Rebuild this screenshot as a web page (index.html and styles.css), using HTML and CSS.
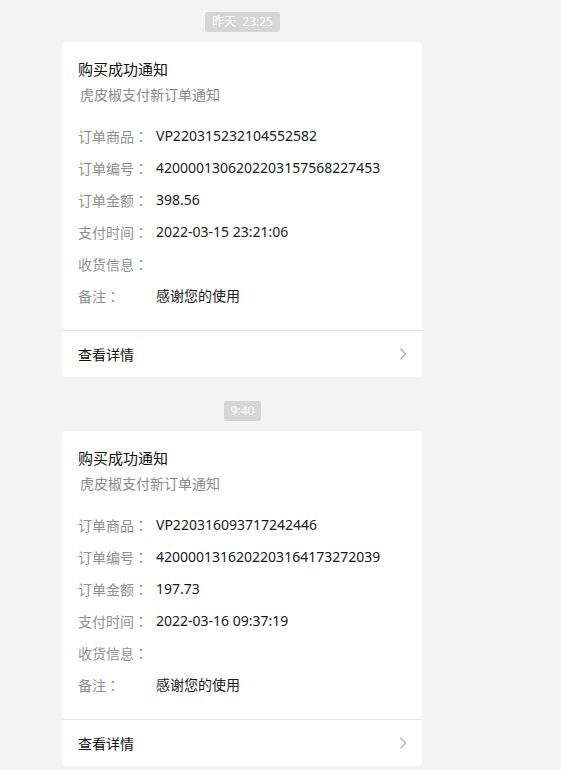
FILE: index.html
```html
<!DOCTYPE html>
<html lang="zh-CN">
<head>
<meta charset="utf-8">
<title>购买成功通知</title>
<link rel="stylesheet" href="styles.css">
</head>
<body>
<div class="feed">
  <div class="msg">
    <div class="time"><span class="pill">昨天&nbsp;&nbsp;23:25</span></div>
    <div class="card">
      <div class="body">
        <div class="title">购买成功通知</div>
        <div class="sub">虎皮椒支付新订单通知</div>
        <div class="rows">
          <div class="label">订单商品<span class="colon" lang="zh-TW">：</span></div><div class="value">VP220315232104552582</div>
          <div class="label">订单编号<span class="colon" lang="zh-TW">：</span></div><div class="value">4200001306202203157568227453</div>
          <div class="label">订单金额<span class="colon" lang="zh-TW">：</span></div><div class="value">398.56</div>
          <div class="label">支付时间<span class="colon" lang="zh-TW">：</span></div><div class="value">2022-03-15 23:21:06</div>
          <div class="label">收货信息<span class="colon" lang="zh-TW">：</span></div><div class="value"></div>
          <div class="label">备注<span class="colon" lang="zh-TW">：</span></div><div class="value">感谢您的使用</div>
        </div>
      </div>
      <div class="foot">
        <span>查看详情</span>
        <svg class="chev" width="8" height="14" viewBox="0 0 8 14"><polyline points="1.5,1.5 6.5,7 1.5,12.5" fill="none" stroke="#b5b5b5" stroke-width="1.4"/></svg>
      </div>
    </div>
  </div>
  <div class="msg">
    <div class="time"><span class="pill">9:40</span></div>
    <div class="card">
      <div class="body">
        <div class="title">购买成功通知</div>
        <div class="sub">虎皮椒支付新订单通知</div>
        <div class="rows">
          <div class="label">订单商品<span class="colon" lang="zh-TW">：</span></div><div class="value">VP220316093717242446</div>
          <div class="label">订单编号<span class="colon" lang="zh-TW">：</span></div><div class="value">4200001316202203164173272039</div>
          <div class="label">订单金额<span class="colon" lang="zh-TW">：</span></div><div class="value">197.73</div>
          <div class="label">支付时间<span class="colon" lang="zh-TW">：</span></div><div class="value">2022-03-16 09:37:19</div>
          <div class="label">收货信息<span class="colon" lang="zh-TW">：</span></div><div class="value"></div>
          <div class="label">备注<span class="colon" lang="zh-TW">：</span></div><div class="value">感谢您的使用</div>
        </div>
      </div>
      <div class="foot">
        <span>查看详情</span>
        <svg class="chev" width="8" height="14" viewBox="0 0 8 14"><polyline points="1.5,1.5 6.5,7 1.5,12.5" fill="none" stroke="#b5b5b5" stroke-width="1.4"/></svg>
      </div>
    </div>
  </div>
</div>
</body>
</html>
```
FILE: styles.css
```css
html, body {
  margin: 0;
  padding: 0;
  background: #f4f4f4;
}
body {
  font-family: "Noto Sans", "Noto Sans CJK SC", sans-serif;
  color: #111;
}
.feed {
  width: 360px;
  margin-left: 62px;
  padding-top: 12px;
  display: flex;
  flex-direction: column;
  gap: 24px;
}
.msg {
  display: flex;
  flex-direction: column;
  gap: 10px;
}
.time {
  display: flex;
  justify-content: center;
  padding-left: 1px;
}
.pill {
  display: inline-block;
  height: 20px;
  line-height: 20px;
  padding: 0 7px;
  background: #d6d6d6;
  color: #fff;
  font-size: 12px;
  border-radius: 2px;
  white-space: pre;
}
.card {
  background: #fff;
  border-radius: 4px;
}
.body {
  padding: 16px 16px 18px;
  border-bottom: 1px solid #e8e8e8;
}
.title {
  font-size: 15px;
  line-height: 22px;
  color: #111;
}
.sub {
  margin-top: 4px;
  padding-left: 2px;
  font-size: 14px;
  line-height: 22px;
  color: #8a8a8a;
}
.rows {
  margin-top: 14px;
  display: grid;
  grid-template-columns: 78px 1fr;
  grid-auto-rows: 32px;
  align-items: center;
  font-size: 14px;
}
.label {
  color: #8f8f8f;
  line-height: 32px;
}
.colon {
  font-family: "Noto Sans CJK TC", "Noto Sans CJK JP", sans-serif;
}
.value {
  color: #1a1a1a;
  line-height: 32px;
}
.foot {
  height: 46px;
  padding: 0 15px 0 16px;
  display: flex;
  align-items: center;
  justify-content: space-between;
  font-size: 14px;
  color: #111;
}
.chev {
  display: block;
}
```
